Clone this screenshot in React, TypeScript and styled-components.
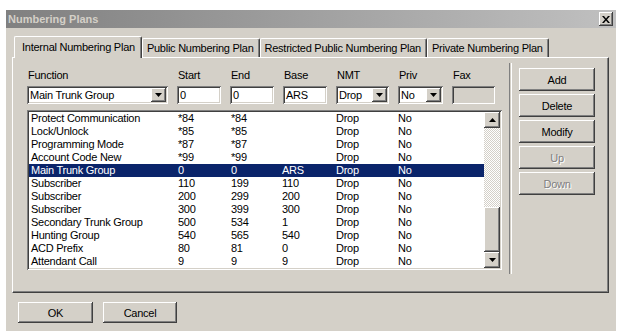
import styled, { createGlobalStyle, css } from 'styled-components'

const GlobalStyle = createGlobalStyle`
  html, body {
    margin: 0;
    padding: 0;
    background: #fff;
  }
  body {
    font-family: "Liberation Sans", Arial, sans-serif;
    font-size: 11px;
    letter-spacing: -0.25px;
    color: #000;
  }
`

const raised = css`
  background: #d4d0c8;
  box-shadow: inset -1px -1px #404040, inset 1px 1px #fff, inset -2px -2px #808080, inset 2px 2px #d4d0c8;
`

const sunken = css`
  box-shadow: inset 1px 1px #808080, inset -1px -1px #fff, inset 2px 2px #404040, inset -2px -2px #d4d0c8;
`

const Page = styled.div`
  padding: 10px 0 0 6px;
`

const Window = styled.div`
  width: 610px;
  height: 321px;
  background: #d4d0c8;
  display: flex;
  flex-direction: column;
`

const TitleBar = styled.div`
  height: 18px;
  background: linear-gradient(to right, #808080, #c0c0c0);
  display: flex;
  align-items: center;
  justify-content: space-between;
  padding: 0 3px 0 2px;
`

const Title = styled.div`
  color: #d4d0c8;
  font-weight: bold;
  font-size: 11px;
  letter-spacing: 0;
`

const CloseButton = styled.div`
  ${raised};
  width: 14px;
  height: 14px;
  display: flex;
  align-items: center;
  justify-content: center;
`

const Body = styled.div`
  display: flex;
  flex-direction: column;
  padding: 8px 7px 0 6px;
`

const TabStrip = styled.div`
  display: flex;
  align-items: flex-end;
  height: 21px;
  padding-left: 2px;
  position: relative;
  z-index: 1;
`

const Tab = styled.div<{ $active?: boolean }>`
  height: ${p => (p.$active ? '22px' : '19px')};
  margin-bottom: ${p => (p.$active ? '-1px' : '0')};
  padding: ${p => (p.$active ? '3px 6px 0 7px' : '2px 5px 0 4px')};
  box-sizing: border-box;
  background: #d4d0c8;
  border-top: 1px solid #fff;
  border-left: 1px solid #fff;
  border-right: 1px solid #404040;
  border-radius: 2px 2px 0 0;
  box-shadow: inset -1px 0 #808080;
  white-space: nowrap;
  line-height: 14px;
`

const Panel = styled.div`
  height: 236px;
  box-sizing: border-box;
  border-top: 1px solid #fff;
  border-left: 1px solid #fff;
  border-right: 1px solid #404040;
  border-bottom: 1px solid #404040;
  box-shadow: inset -1px -1px #808080;
  display: flex;
  padding: 5px 0 0 14px;
`

const LeftSection = styled.div`
  width: 475px;
  padding-top: 6px;
  display: flex;
  flex-direction: column;
`

const Fields = styled.div`
  display: grid;
  grid-template-columns: 141px 44px 44px 44px 53px 45px 43px;
  column-gap: 9px;
  row-gap: 4px;
`

const Label = styled.div`
  height: 13px;
  line-height: 13px;
  padding-left: 1px;
`

const TextField = styled.div<{ $disabled?: boolean }>`
  ${sunken};
  height: 18px;
  box-sizing: border-box;
  background: ${p => (p.$disabled ? '#d4d0c8' : '#fff')};
  padding: 2px 3px;
  line-height: 14px;
  display: flex;
  align-items: center;
  justify-content: space-between;
`

const DropButton = styled.div`
  ${raised};
  width: 15px;
  height: 14px;
  margin-right: -1px;
  display: flex;
  align-items: center;
  justify-content: center;
`

const List = styled.div`
  ${sunken};
  margin-top: 6px;
  height: 160px;
  box-sizing: border-box;
  padding: 2px;
  background: #fff;
  display: flex;
`

const Rows = styled.div`
  flex: 1;
`

const Row = styled.div<{ $selected?: boolean }>`
  display: grid;
  grid-template-columns: 147px 53px 51px 54px 62px 1fr;
  height: 13px;
  line-height: 13px;
  padding-left: 2px;
  white-space: nowrap;
  background: ${p => (p.$selected ? '#0a246a' : 'transparent')};
  color: ${p => (p.$selected ? '#fff' : '#000')};
`

const ScrollBar = styled.div`
  width: 16px;
  display: flex;
  flex-direction: column;
`

const ScrollButton = styled.div`
  ${raised};
  width: 16px;
  height: 16px;
  display: flex;
  align-items: center;
  justify-content: center;
`

const Track = styled.div`
  flex: 1;
  background: repeating-conic-gradient(#fff 0 25%, #d4d0c8 0 50%) 0 0 / 2px 2px;
`

const Thumb = styled.div`
  ${raised};
  height: 45px;
`

const Separator = styled.div`
  margin-left: 7px;
  width: 1px;
  height: 211px;
  border-left: 1px solid #808080;
  border-right: 1px solid #fff;
`

const ButtonColumn = styled.div`
  margin: 5px 0 0 7px;
  width: 76px;
  display: flex;
  flex-direction: column;
  gap: 3px;
`

const Button = styled.div<{ $disabled?: boolean; $width?: number }>`
  ${raised};
  width: ${p => (p.$width ? `${p.$width}px` : 'auto')};
  height: 23px;
  display: flex;
  align-items: center;
  justify-content: center;
  color: ${p => (p.$disabled ? '#808080' : '#000')};
  text-shadow: ${p => (p.$disabled ? '1px 1px #fff' : 'none')};
`

const BottomBar = styled.div`
  display: flex;
  gap: 10px;
  padding: 9px 0 0 6px;

  ${Button} {
    height: 21px;
  }
`

const Arrow = ({ up }: { up?: boolean }) => (
  <svg width="7" height="4" viewBox="0 0 7 4">
    <polygon points={up ? '3.5,0 7,4 0,4' : '0,0 7,0 3.5,4'} fill="#000" />
  </svg>
)

type Plan = {
  fn: string
  start: string
  end: string
  base: string
  nmt: string
  priv: string
}

const rows: Plan[] = [
  { fn: 'Protect Communication', start: '*84', end: '*84', base: '', nmt: 'Drop', priv: 'No' },
  { fn: 'Lock/Unlock', start: '*85', end: '*85', base: '', nmt: 'Drop', priv: 'No' },
  { fn: 'Programming Mode', start: '*87', end: '*87', base: '', nmt: 'Drop', priv: 'No' },
  { fn: 'Account Code New', start: '*99', end: '*99', base: '', nmt: 'Drop', priv: 'No' },
  { fn: 'Main Trunk Group', start: '0', end: '0', base: 'ARS', nmt: 'Drop', priv: 'No' },
  { fn: 'Subscriber', start: '110', end: '199', base: '110', nmt: 'Drop', priv: 'No' },
  { fn: 'Subscriber', start: '200', end: '299', base: '200', nmt: 'Drop', priv: 'No' },
  { fn: 'Subscriber', start: '300', end: '399', base: '300', nmt: 'Drop', priv: 'No' },
  { fn: 'Secondary Trunk Group', start: '500', end: '534', base: '1', nmt: 'Drop', priv: 'No' },
  { fn: 'Hunting Group', start: '540', end: '565', base: '540', nmt: 'Drop', priv: 'No' },
  { fn: 'ACD Prefix', start: '80', end: '81', base: '0', nmt: 'Drop', priv: 'No' },
  { fn: 'Attendant Call', start: '9', end: '9', base: '9', nmt: 'Drop', priv: 'No' },
]

const tabs = [
  'Internal Numbering Plan',
  'Public Numbering Plan',
  'Restricted Public Numbering Plan',
  'Private Numbering Plan',
]

const App = () => {
  return (
    <Page>
      <GlobalStyle />
      <Window>
        <TitleBar>
          <Title>Numbering Plans</Title>
          <CloseButton>
            <svg width="8" height="7" viewBox="0 0 8 7">
              <path d="M0 0 L2 0 L4 2.5 L6 0 L8 0 L5 3.5 L8 7 L6 7 L4 4.5 L2 7 L0 7 L3 3.5 Z" fill="#000" />
            </svg>
          </CloseButton>
        </TitleBar>
        <Body>
          <TabStrip>
            {tabs.map((t, i) => (
              <Tab key={t} $active={i === 0}>{t}</Tab>
            ))}
          </TabStrip>
          <Panel>
            <LeftSection>
              <Fields>
                <Label>Function</Label>
                <Label>Start</Label>
                <Label>End</Label>
                <Label>Base</Label>
                <Label>NMT</Label>
                <Label>Priv</Label>
                <Label>Fax</Label>
                <TextField>
                  Main Trunk Group
                  <DropButton><Arrow /></DropButton>
                </TextField>
                <TextField>0</TextField>
                <TextField>0</TextField>
                <TextField>ARS</TextField>
                <TextField>
                  Drop
                  <DropButton><Arrow /></DropButton>
                </TextField>
                <TextField>
                  No
                  <DropButton><Arrow /></DropButton>
                </TextField>
                <TextField $disabled />
              </Fields>
              <List>
                <Rows>
                  {rows.map((r, i) => (
                    <Row key={i} $selected={i === 4}>
                      <span>{r.fn}</span>
                      <span>{r.start}</span>
                      <span>{r.end}</span>
                      <span>{r.base}</span>
                      <span>{r.nmt}</span>
                      <span>{r.priv}</span>
                    </Row>
                  ))}
                </Rows>
                <ScrollBar>
                  <ScrollButton><Arrow up /></ScrollButton>
                  <Track />
                  <Thumb />
                  <ScrollButton><Arrow /></ScrollButton>
                </ScrollBar>
              </List>
            </LeftSection>
            <Separator />
            <ButtonColumn>
              <Button>Add</Button>
              <Button>Delete</Button>
              <Button>Modify</Button>
              <Button $disabled>Up</Button>
              <Button $disabled>Down</Button>
            </ButtonColumn>
          </Panel>
          <BottomBar>
            <Button $width={75}>OK</Button>
            <Button $width={74}>Cancel</Button>
          </BottomBar>
        </Body>
      </Window>
    </Page>
  )
}

export default App
